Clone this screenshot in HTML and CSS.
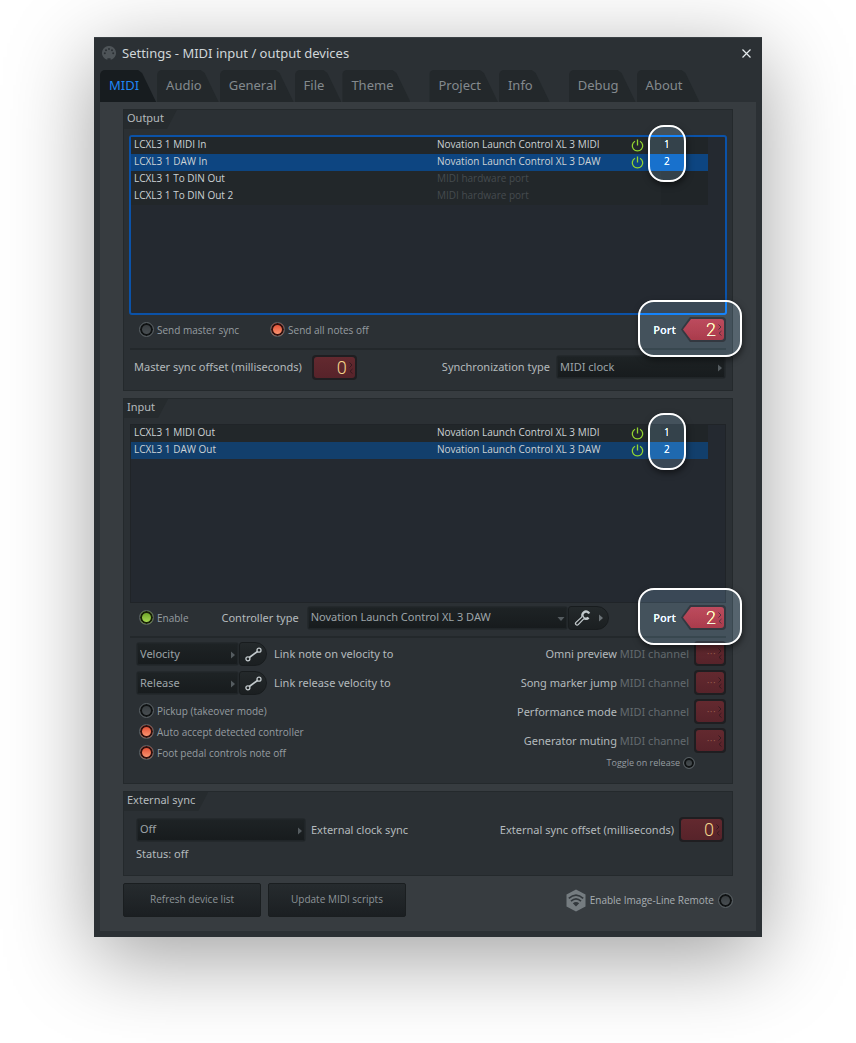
FILE: index.html
```html
<!DOCTYPE html>
<html lang="en">
<head>
  <meta charset="UTF-8" />
  <meta name="viewport" content="width=device-width, initial-scale=1" />
  <title>Settings - MIDI input / output devices</title>
  <link rel="stylesheet" href="styles.css">
</head>
<body>
  <!-- Shared icons -->
  <svg class="defs" width="0" height="0" aria-hidden="true">
    <symbol id="power" viewBox="0 0 13 13">
      <path d="M4 2.2A5.2 5.2 0 1 0 9 2.2M6.5 0.5V6.5" fill="none" stroke="currentColor" stroke-width="1.3"/>
    </symbol>
    <symbol id="arrow" viewBox="0 0 4 8"><path d="M0 0.5L4 4L0 7.5Z" fill="currentColor"/></symbol>
    <symbol id="steps" viewBox="0 0 4 12">
      <path d="M0.5 0.5L3 3L0.5 5.5M3.5 7L1 9.3L3.5 11.5" fill="none" stroke="currentColor"/>
    </symbol>
    <symbol id="link" viewBox="0 0 17 15">
      <path d="M4.3 10.5L12.5 4.5" stroke="currentColor" stroke-width="1.6"/>
      <circle cx="2.9" cy="11.8" r="2" fill="none" stroke="currentColor" stroke-width="1.3"/>
      <circle cx="14" cy="3.2" r="2" fill="none" stroke="currentColor" stroke-width="1.3"/>
    </symbol>
  </svg>

  <main class="window">
    <header class="titlebar">
      <svg class="logo" width="14" height="14" viewBox="0 0 14 14">
        <path d="M5.4 13.8A7 7 0 1 1 8.6 13.8V12.3H5.4Z" fill="#4e5458"/>
        <g fill="#2b3034"><circle cx="2.8" cy="7.3" r="1"/><circle cx="4" cy="4.2" r="1"/><circle cx="7" cy="2.9" r="1"/><circle cx="10" cy="4.2" r="1"/><circle cx="11.2" cy="7.3" r="1"/></g>
      </svg>
      <h1>Settings - MIDI input / output devices</h1>
      <button class="close" aria-label="Close">
        <svg width="9" height="9" viewBox="0 0 9 9"><path d="M0.5 0.5L8.5 8.5M8.5 0.5L0.5 8.5" stroke="#e4eaec" stroke-width="1.2"/></svg>
      </button>
    </header>

    <nav class="tabs">
      <button class="tab active">MIDI</button>
      <button class="tab">Audio</button>
      <button class="tab">General</button>
      <button class="tab">File</button>
      <button class="tab">Theme</button>
      <button class="tab spaced">Project</button>
      <button class="tab">Info</button>
      <button class="tab spaced">Debug</button>
      <button class="tab">About</button>
    </nav>

    <div class="content">
      <!-- Output devices -->
      <section class="group output">
        <h2>Output</h2>
        <div class="list focused">
          <table>
            <colgroup><col><col class="c-device"><col class="c-power"><col class="c-port"></colgroup>
            <tr><td>LCXL3 1 MIDI In</td><td>Novation Launch Control XL 3 MIDI</td><td class="power"><svg><use href="#power"/></svg></td><td class="num">1</td></tr>
            <tr class="selected"><td>LCXL3 1 DAW In</td><td>Novation Launch Control XL 3 DAW</td><td class="power"><svg><use href="#power"/></svg></td><td class="num">2</td></tr>
            <tr><td>LCXL3 1 To DIN Out</td><td class="dim">MIDI hardware port</td><td></td><td class="num"></td></tr>
            <tr><td>LCXL3 1 To DIN Out 2</td><td class="dim">MIDI hardware port</td><td></td><td class="num"></td></tr>
          </table>
          <span class="ring ring-list"></span>
        </div>
        <div class="row checks">
          <label class="check"><input type="checkbox">Send master sync</label>
          <label class="check"><input type="checkbox" checked>Send all notes off</label>
          <div class="port">
            <label for="out-port">Port</label>
            <span class="spin pointed"><input id="out-port" type="text" value="2"><svg><use href="#steps"/></svg></span>
            <span class="ring ring-port"></span>
          </div>
        </div>
        <div class="row sync">
          <label for="offset">Master sync offset (milliseconds)</label>
          <span class="spin"><input id="offset" type="text" value="0"><svg><use href="#steps"/></svg></span>
          <label class="push" for="sync-type">Synchronization type</label>
          <span class="select w-sync"><select id="sync-type"><option>MIDI clock</option></select><svg><use href="#arrow"/></svg></span>
        </div>
      </section>

      <!-- Input devices -->
      <section class="group input">
        <h2>Input</h2>
        <div class="list">
          <table>
            <colgroup><col><col class="c-device"><col class="c-power"><col class="c-port"></colgroup>
            <tr><td>LCXL3 1 MIDI Out</td><td>Novation Launch Control XL 3 MIDI</td><td class="power"><svg><use href="#power"/></svg></td><td class="num">1</td></tr>
            <tr class="selected"><td>LCXL3 1 DAW Out</td><td>Novation Launch Control XL 3 DAW</td><td class="power"><svg><use href="#power"/></svg></td><td class="num">2</td></tr>
          </table>
          <span class="ring ring-list"></span>
        </div>
        <div class="row checks">
          <label class="check green"><input type="checkbox" checked>Enable</label>
          <label class="controller" for="controller">Controller type</label>
          <span class="select down w-controller"><select id="controller"><option>Novation Launch Control XL 3 DAW</option></select><svg><use href="#arrow"/></svg></span>
          <button class="pill tool" aria-label="Controller options">
            <svg width="17" height="17" viewBox="0 0 17 17">
              <path d="M15.2 4.6A3.6 3.6 0 1 0 14.6 8.6" fill="none" stroke="#c3cacd" stroke-width="2.4"/>
              <path d="M8.2 7.6L2 13.4A1.5 1.5 0 0 0 4.2 15.6L10 9.6" fill="#1e2224" stroke="#c3cacd" stroke-width="1.3"/>
            </svg>
            <svg class="more"><use href="#arrow"/></svg>
          </button>
          <div class="port">
            <label for="in-port">Port</label>
            <span class="spin pointed"><input id="in-port" type="text" value="2"><svg><use href="#steps"/></svg></span>
            <span class="ring ring-port"></span>
          </div>
        </div>
        <div class="columns">
          <div class="left">
            <div class="linkrow">
              <span class="select w-link"><select id="velocity"><option>Velocity</option></select><svg><use href="#arrow"/></svg></span>
              <button class="pill" aria-label="Link velocity"><svg width="17" height="15"><use href="#link"/></svg></button>
              <label for="velocity">Link note on velocity to</label>
            </div>
            <div class="linkrow">
              <span class="select w-link"><select id="release"><option>Release</option></select><svg><use href="#arrow"/></svg></span>
              <button class="pill" aria-label="Link release"><svg width="17" height="15"><use href="#link"/></svg></button>
              <label for="release">Link release velocity to</label>
            </div>
            <label class="check"><input type="checkbox">Pickup (takeover mode)</label>
            <label class="check"><input type="checkbox" checked>Auto accept detected controller</label>
            <label class="check"><input type="checkbox" checked>Foot pedal controls note off</label>
          </div>
          <div class="right">
            <div class="channel"><label for="omni">Omni preview <span>MIDI channel</span></label><span class="spin small"><input id="omni" type="text" value="···"><svg><use href="#steps"/></svg></span></div>
            <div class="channel"><label for="marker">Song marker jump <span>MIDI channel</span></label><span class="spin small"><input id="marker" type="text" value="···"><svg><use href="#steps"/></svg></span></div>
            <div class="channel"><label for="perf">Performance mode <span>MIDI channel</span></label><span class="spin small"><input id="perf" type="text" value="···"><svg><use href="#steps"/></svg></span></div>
            <div class="channel"><label for="mute">Generator muting <span>MIDI channel</span></label><span class="spin small"><input id="mute" type="text" value="···"><svg><use href="#steps"/></svg></span></div>
            <label class="check toggle">Toggle on release<input type="checkbox"></label>
          </div>
        </div>
      </section>

      <!-- External sync -->
      <section class="group external">
        <h2>External sync</h2>
        <div class="row clock">
          <span class="select w-clock"><select id="clock"><option>Off</option></select><svg><use href="#arrow"/></svg></span>
          <label for="clock">External clock sync</label>
          <label class="push" for="ext-offset">External sync offset (milliseconds)</label>
          <span class="spin"><input id="ext-offset" type="text" value="0"><svg><use href="#steps"/></svg></span>
        </div>
        <p class="status">Status: off</p>
      </section>

      <footer>
        <button class="action">Refresh device list</button>
        <button class="action">Update MIDI scripts</button>
        <label class="check remote">
          <svg width="20" height="23" viewBox="0 0 20 23">
            <path d="M10 0.5L19.5 5.5V17.5L10 22.5L0.5 17.5V5.5Z" fill="#757c80"/>
            <path d="M2.8 9.4Q10 2.8 17.2 9.4M5 12.2Q10 7.6 15 12.2" fill="none" stroke="#33393d" stroke-width="1.7"/>
            <path d="M6.8 14.2Q10 11.6 13.2 14.2L10 17.6Z" fill="#33393d"/>
          </svg>
          Enable Image-Line Remote<input type="checkbox">
        </label>
      </footer>
    </div>
  </main>
</body>
</html>
```

FILE: styles.css
```css
* { box-sizing: border-box; }
body {
  margin: 0;
  padding: 37px 16px 106px;
  background: #fff;
  color: #b4babd;
  font-family: "Noto Sans", "Open Sans", sans-serif;
  font-size: 11px;
  line-height: 16px;
}
h1, h2, p { margin: 0; font-weight: normal; }
button, input, select { font: inherit; color: inherit; margin: 0; padding: 0; border: 0; }
svg { display: block; flex: none; }
.defs { position: absolute; }

.window {
  max-width: 668px;
  margin: 0 auto;
  padding: 0 6px 6px;
  background: #2b3034;
  border-top: 1px solid #3a4044;
  box-shadow: 0 20px 80px rgba(0, 0, 0, 0.38);
}

/* Title bar */
.titlebar { display: flex; align-items: center; height: 32px; padding: 0 5px 2px 2px; }
.titlebar h1 { flex: 1; margin-left: 6px; font-size: 13px; color: #d0d6d9; }
.close { background: none; }

/* Tabs */
.tabs { display: flex; gap: 1px; height: 32px; }
.tab {
  padding: 0 17px 2px 9px;
  background: #23282b;
  border-radius: 5px 0 0 0;
  clip-path: polygon(0 0, calc(100% - 18px) 0, calc(100% - 14px) 3px, 100% 100%, 0 100%);
  color: #838a8e;
  font-size: 13px;
}
.tab.active { background: #171c1f; color: #1e86f5; }
.tab.spaced { margin-left: 18px; }

.content { padding: 7px 23px 14px; background: #373c40; }

/* Group boxes */
.group {
  margin-bottom: 7px;
  background: #2b3034;
  border: 1px solid #24292c;
}
.group h2 {
  width: fit-content;
  height: 19px;
  padding: 0 13px 0 3px;
  background: #262b2e;
  clip-path: polygon(0 0, 100% 0, calc(100% - 10px) 100%, 0 100%);
  font-size: 11px;
  line-height: 16px;
}
.output { height: 282px; }
.input { height: 386px; }
.external { height: 85px; }

/* Device lists */
.list {
  position: relative;
  height: 179px;
  margin: 6px 6px 0;
  background: #242930;
  border: 1px solid #202428;
}
.list.focused {
  height: 180px;
  margin: 6px 5px 0;
  border: 2px solid #0b52a8;
  border-radius: 3px;
}
.list table {
  width: calc(100% - 17px);
  table-layout: fixed;
  border-collapse: collapse;
  background: #22272a;
  color: #ccd2d5;
  font-family: "Open Sans", "Noto Sans", sans-serif;
  font-size: 10px;
}
.c-device { width: 180px; }
.c-power, .c-port { width: 47px; }
.list td { height: 17px; padding: 0 3px 2px; line-height: 15px; white-space: nowrap; }
.list td.dim { color: #454b4f; }
.list td.power { padding-bottom: 0; color: #93d531; }
.power svg { width: 13px; height: 13px; margin-left: 14px; }
.list .num { background: #202528; }
.selected td, .list .selected .num { background: #0d4581; }
.input .selected td, .input .list .selected .num { background: #123f6c; }

/* Callout rings */
.ring {
  position: absolute;
  z-index: 1;
  border: 2px solid #fff;
  border-radius: 16px;
  background: rgba(60, 150, 200, 0.08);
  backdrop-filter: brightness(1.6);
  box-shadow: 1px 3px 6px rgba(0, 0, 0, 0.5);
  pointer-events: none;
}
.ring-list { top: -12px; right: 39px; width: 38px; height: 57px; }
.ring-port { inset: -17px -16px -15px -15px; }

/* Rows and labels */
.row { display: flex; align-items: center; }
.push { margin-left: auto; }
.checks { height: 35px; margin: 0 6px; padding: 0 0 4px 9px; border-bottom: 2px solid #23282b; }
.sync { height: 34px; margin: 0 6px; padding-left: 4px; gap: 6px; }
.sync .spin { margin-left: 4px; }
.check {
  display: flex;
  align-items: center;
  gap: 3px;
  color: #969da1;
  font-family: "Open Sans", "Noto Sans", sans-serif;
  font-size: 10px;
}
.check + .check { margin-left: 31px; }
.check input {
  appearance: none;
  width: 15px;
  height: 15px;
  border: 1px solid #596064;
  border-radius: 50%;
  background: linear-gradient(#34393c, #4c5256);
  box-shadow: inset 0 0 0 2px #101314;
}
.check input:checked { background: linear-gradient(#e0442b, #ffa27c); box-shadow: inset 0 0 0 2px #30100e; }
.green input:checked { background: linear-gradient(#669c21, #b0e35a); box-shadow: inset 0 0 0 2px #182009; }
.controller { margin-left: 33px; margin-right: 8px; }

/* Drop-downs */
.select { position: relative; height: 24px; }
.select select {
  appearance: none;
  width: 100%;
  height: 24px;
  padding: 0 3px 1px;
  background: linear-gradient(#1e2325, #171b1d);
  border: 1px solid #24292c;
  border-radius: 3px;
  box-shadow: inset 0 0 0 1px #202528;
  color: #9da4a8;
}
.select svg { position: absolute; top: 9px; right: 4px; width: 4px; height: 8px; color: #555c60; }
.select.down svg { transform: rotate(90deg); right: 5px; }
.w-sync { width: 170px; }
.w-controller { width: 261px; }
.w-link { width: 103px; }
.w-clock { width: 170px; }
.pill {
  display: flex;
  align-items: center;
  justify-content: center;
  width: 28px;
  height: 24px;
  background: linear-gradient(#24292b, #1b1f21);
  border: 1px solid #181c1e;
  border-radius: 3px 12px 12px 3px;
  color: #c3cacd;
}
.tool { width: 41px; gap: 8px; }
.more { width: 4px; height: 8px; color: #6b7276; }

/* Number boxes */
.spin {
  position: relative;
  width: 45px;
  height: 25px;
  padding: 2px;
  background: #1f1e21;
  border-radius: 4px;
}
.spin input {
  display: block;
  width: 100%;
  height: 21px;
  padding-right: 8px;
  background: linear-gradient(#63292f, #57232a);
  border-radius: 3px;
  color: #f5d68c;
  font-family: "Liberation Sans Narrow", Roboto, sans-serif;
  font-size: 18px;
  font-weight: 300;
  text-align: right;
}
.spin svg { position: absolute; top: 7px; right: 4px; width: 4px; height: 12px; color: #381a20; }
.pointed { clip-path: polygon(0 50%, 9px 0, 100% 0, 100% 100%, 9px 100%); }
.pointed input {
  background: linear-gradient(#7d2b35, #702129);
  clip-path: polygon(0 50%, 8px 0, 100% 0, 100% 100%, 8px 100%);
}
.small { width: 32px; }
.small input { color: #a06a55; font-size: 13px; }
.port { position: relative; display: flex; align-items: center; gap: 5px; margin-left: auto; color: #b4babd; font-weight: 600; }

/* Link and channel settings */
.columns { display: flex; justify-content: space-between; padding: 3px 6px 0 12px; }
.left { padding-top: 1px; }
.linkrow { display: flex; align-items: center; margin-bottom: 5px; }
.linkrow label { margin-left: 7px; }
.left .check { height: 21px; margin-left: 3px; }
.right { display: flex; flex-direction: column; align-items: flex-end; }
.channel { display: flex; align-items: center; gap: 5px; height: 25px; margin-bottom: 4px; }
.channel label span { color: #636a6e; }
.toggle { height: 11px; margin-right: 31px; font-size: 9px; }
.toggle input { width: 12px; height: 12px; }

.clock { height: 25px; margin: 6px 8px 0 12px; gap: 5px; }
.status { margin: 4px 12px 0; }

/* Bottom bar */
footer { display: flex; align-items: center; gap: 7px; }
.action {
  width: 138px;
  height: 34px;
  padding-bottom: 2px;
  background: linear-gradient(#262b2e, #1b1f22);
  border: 1px solid #1a1e20;
  border-radius: 2px;
  color: #8d9498;
  font-family: "Open Sans", "Noto Sans", sans-serif;
  font-size: 10px;
}
.remote { margin-left: auto; color: #a8afb3; gap: 4px; }
```
